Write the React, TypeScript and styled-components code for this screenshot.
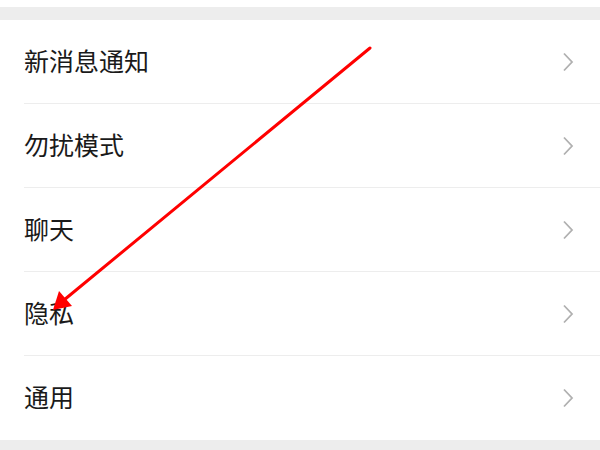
import { VFC } from 'react'
import styled, { createGlobalStyle } from 'styled-components'

const GlobalStyle = createGlobalStyle`
  html, body {
    margin: 0;
    padding: 0;
    background: #ffffff;
  }
  body {
    font-family: "Noto Sans CJK SC", "Noto Sans", sans-serif;
  }
`

const Page = styled.div`
  position: relative;
  width: 600px;
  height: 450px;
  overflow: hidden;
  background: #ffffff;
  padding-top: 7px;
  box-sizing: border-box;
`
const Band = styled.div<{ $h: number }>`
  height: ${p => p.$h}px;
  background: #ededed;
`
const List = styled.ul`
  list-style: none;
  margin: 0;
  padding: 0;
  background: #ffffff;
`
const Row = styled.li`
  display: flex;
  align-items: center;
  padding-left: 24px;
  height: 84px;
`
const RowInner = styled.div<{ $last?: boolean }>`
  flex: 1;
  height: 100%;
  display: flex;
  align-items: center;
  justify-content: space-between;
  padding-right: 26px;
  box-sizing: border-box;
  border-bottom: ${p => (p.$last ? 'none' : '1px solid #ededed')};
`
const Label = styled.span`
  font-size: 25px;
  color: #1a1a1a;
  line-height: 1;
  margin-top: -3px;
`
const Chevron = styled.svg`
  width: 12px;
  height: 20px;
  display: block;
`
const Arrow = styled.svg`
  position: absolute;
  left: 0;
  top: 0;
  pointer-events: none;
`

const items = ['新消息通知', '勿扰模式', '聊天', '隐私', '通用']

const App: VFC = () => {
  return (
    <Page>
      <GlobalStyle />
      <Band $h={13} />
      <List>
        {items.map((item, i) => (
          <Row key={item}>
            <RowInner $last={i === items.length - 1}>
              <Label>{item}</Label>
              <Chevron viewBox="0 0 12 20">
                <polyline points="2,1.5 10,10 2,18.5" fill="none" stroke="#b0b0b0" strokeWidth="1.8" />
              </Chevron>
            </RowInner>
          </Row>
        ))}
      </List>
      <Band $h={20} />
      <Arrow width="600" height="450" viewBox="0 0 600 450">
        <line x1="370" y1="48" x2="64" y2="300" stroke="#ff0000" strokeWidth="3" strokeLinecap="round" />
        <polygon points="53,310 59,291 72,306" fill="#ff0000" />
      </Arrow>
    </Page>
  )
}

export default App
